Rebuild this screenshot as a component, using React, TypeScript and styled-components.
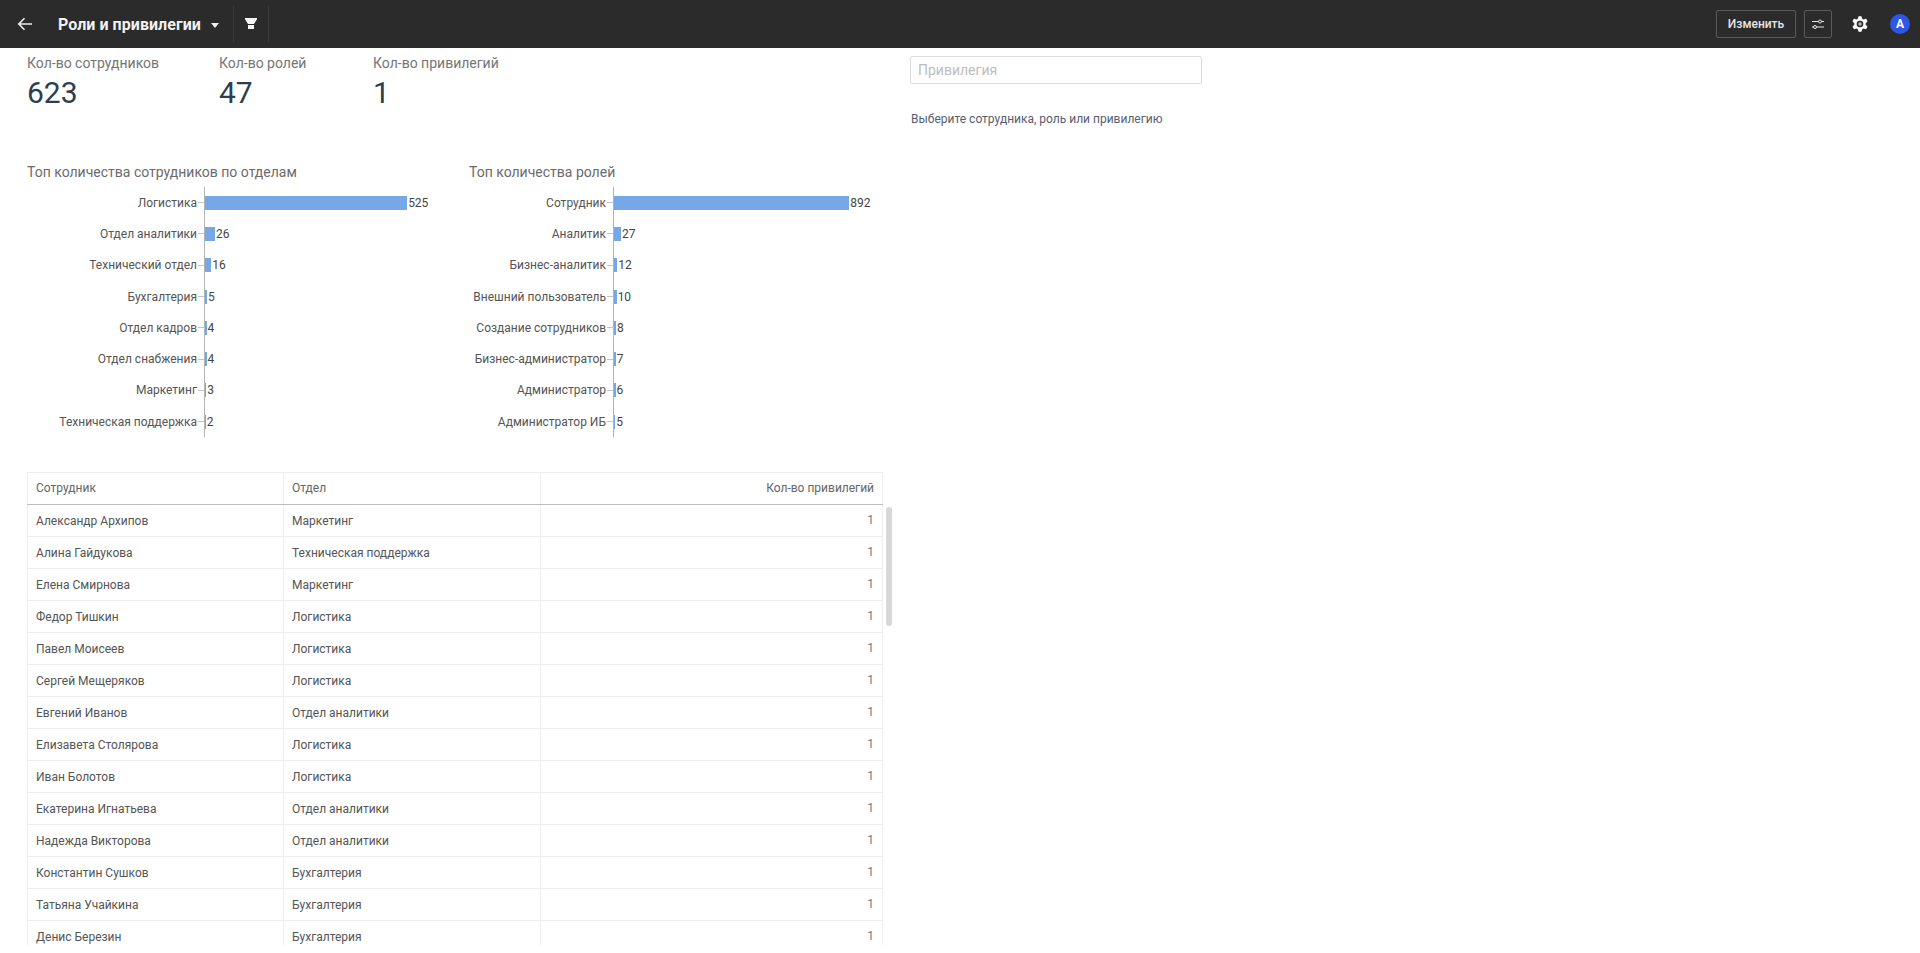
import styled, { createGlobalStyle } from "styled-components";

const GlobalStyle = createGlobalStyle`
  html, body {
    margin: 0;
    padding: 0;
    height: 100%;
    background: #fff;
    overflow: hidden;
    font-family: Roboto, "Liberation Sans", sans-serif;
  }
`;

const Page = styled.div`
  height: 953px;
  overflow: hidden;
`;

const Header = styled.header`
  height: 48px;
  background-color: #2b2b2b;
  display: flex;
  align-items: center;
  color: #fff;
`;

const BackButton = styled.div`
  width: 50px;
  height: 48px;
  display: flex;
  align-items: center;
  justify-content: center;
`;

const PageTitle = styled.div`
  margin-left: 8px;
  font-size: 16px;
  font-weight: 700;
  letter-spacing: 0.05px;
  color: #f2f2f2;
`;

const TitleCaret = styled.div`
  margin-left: 10px;
  margin-top: 2px;
  width: 0;
  height: 0;
  border-left: 4px solid transparent;
  border-right: 4px solid transparent;
  border-top: 5px solid #eee;
`;

const FilterButton = styled.div`
  margin-left: 14px;
  width: 34px;
  height: 36px;
  border-left: 1px solid #3d3d3d;
  border-right: 1px solid #3d3d3d;
  display: flex;
  align-items: center;
  justify-content: center;
`;

const HeaderActions = styled.div`
  margin-left: auto;
  display: flex;
  align-items: center;
`;

const EditButton = styled.div`
  width: 80px;
  height: 28px;
  box-sizing: border-box;
  border: 1px solid #5a5a5a;
  border-radius: 2px;
  display: flex;
  align-items: center;
  justify-content: center;
  font-size: 12px;
  font-weight: 500;
  color: #e4e4e4;
`;

const IconButton = styled.div`
  margin-left: 8px;
  width: 28px;
  height: 28px;
  box-sizing: border-box;
  border: 1px solid #5a5a5a;
  border-radius: 2px;
  display: flex;
  align-items: center;
  justify-content: center;
`;

const SettingsIcon = styled.div`
  margin-left: 16px;
  width: 24px;
  height: 24px;
  display: flex;
  align-items: center;
  justify-content: center;
`;

const Avatar = styled.div`
  margin-left: 18px;
  margin-right: 10px;
  width: 20px;
  height: 20px;
  border-radius: 50%;
  background-color: #2f55e6;
  color: #fff;
  font-size: 12px;
  font-weight: 700;
  display: flex;
  align-items: center;
  justify-content: center;
`;

const Content = styled.main`
  display: flex;
  height: 897px;
`;

const LeftColumn = styled.section`
  width: 895px;
  box-sizing: border-box;
  padding: 7px 0 0 27px;
  display: flex;
  flex-direction: column;
`;

const RightColumn = styled.aside`
  margin-left: 15px;
  padding-top: 8px;
  width: 292px;
`;

const Stats = styled.div`
  display: flex;
`;

const Stat = styled.div<{ $width: number }>`
  width: ${({ $width }) => $width}px;
`;

const StatLabel = styled.div`
  font-size: 14px;
  line-height: 16px;
  color: #757575;
`;

const StatValue = styled.div`
  margin-top: 4px;
  font-size: 30px;
  line-height: 36px;
  color: #2c3e50;
`;

const Charts = styled.div`
  margin-top: 53px;
  display: flex;
`;

const ChartBlock = styled.div<{ $width: number }>`
  width: ${({ $width }) => $width}px;
`;

const ChartTitle = styled.div`
  margin-bottom: 7px;
  font-size: 14px;
  line-height: 16px;
  color: #6b6b6b;
`;

const ChartRow = styled.div`
  display: flex;
  height: 31.3px;
  align-items: center;
`;

const RowLabel = styled.div<{ $width: number }>`
  width: ${({ $width }) => $width}px;
  flex: none;
  text-align: right;
  font-size: 12px;
  color: #555;
  white-space: nowrap;
`;

const Tick = styled.div`
  width: 6px;
  margin-left: 1px;
  height: 1px;
  flex: none;
  background-color: #c4c4c4;
`;

const BarTrack = styled.div`
  height: 100%;
  flex: 1;
  display: flex;
  align-items: center;
  border-left: 1px solid #b3b3b3;
`;

const Bar = styled.div`
  height: 14px;
  flex: none;
  background-color: #76a7e6;
`;

const BarValue = styled.div`
  margin-left: 1px;
  font-size: 12px;
  color: #444;
`;

const TableArea = styled.div`
  margin-top: 35px;
  height: 473px;
  overflow: hidden;
  display: flex;
`;

const Table = styled.table`
  width: 855px;
  height: fit-content;
  flex: none;
  table-layout: fixed;
  border-collapse: collapse;
  font-size: 12px;
`;

const HeadCell = styled.th<{ $right?: boolean; $width: number }>`
  width: ${({ $width }) => $width}px;
  height: 32px;
  box-sizing: border-box;
  padding: 0 8px 1px 8px;
  border: 1px solid #eeeeee;
  border-bottom: 1px solid #bdbdbd;
  font-weight: 400;
  color: #666;
  text-align: ${({ $right }) => ($right ? "right" : "left")};
`;

const Cell = styled.td<{ $right?: boolean }>`
  height: 32px;
  box-sizing: border-box;
  padding: ${({ $right }) => ($right ? "0 8px 1px 8px" : "1px 8px 0 8px")};
  border: 1px solid #eeeeee;
  color: ${({ $right }) => ($right ? "#777" : "#555")};
  text-align: ${({ $right }) => ($right ? "right" : "left")};
`;

const ScrollThumb = styled.div`
  margin: 35px 0 0 3px;
  width: 6px;
  height: 119px;
  border-radius: 3px;
  flex: none;
  background-color: #d8d8d8;
`;

const SearchInput = styled.input`
  display: block;
  width: 292px;
  height: 28px;
  box-sizing: border-box;
  padding: 0 8px 1px 7px;
  border: 1px solid #dcdcdc;
  border-radius: 2px;
  outline: none;
  font-family: inherit;
  font-size: 14px;
  &::placeholder {
    color: #bdbdbd;
  }
`;

const Hint = styled.div`
  margin: 28px 0 0 1px;
  font-size: 12px;
  line-height: 14px;
  color: #566070;
`;

const stats = [
  { label: "Кол-во сотрудников", value: 623, width: 192 },
  { label: "Кол-во ролей", value: 47, width: 154 },
  { label: "Кол-во привилегий", value: 1, width: 160 },
];

const departments = [
  { name: "Логистика", count: 525 },
  { name: "Отдел аналитики", count: 26 },
  { name: "Технический отдел", count: 16 },
  { name: "Бухгалтерия", count: 5 },
  { name: "Отдел кадров", count: 4 },
  { name: "Отдел снабжения", count: 4 },
  { name: "Маркетинг", count: 3 },
  { name: "Техническая поддержка", count: 2 },
];

const roles = [
  { name: "Сотрудник", count: 892 },
  { name: "Аналитик", count: 27 },
  { name: "Бизнес-аналитик", count: 12 },
  { name: "Внешний пользователь", count: 10 },
  { name: "Создание сотрудников", count: 8 },
  { name: "Бизнес-администратор", count: 7 },
  { name: "Администратор", count: 6 },
  { name: "Администратор ИБ", count: 5 },
];

const employees = [
  ["Александр Архипов", "Маркетинг"],
  ["Алина Гайдукова", "Техническая поддержка"],
  ["Елена Смирнова", "Маркетинг"],
  ["Федор Тишкин", "Логистика"],
  ["Павел Моисеев", "Логистика"],
  ["Сергей Мещеряков", "Логистика"],
  ["Евгений Иванов", "Отдел аналитики"],
  ["Елизавета Столярова", "Логистика"],
  ["Иван Болотов", "Логистика"],
  ["Екатерина Игнатьева", "Отдел аналитики"],
  ["Надежда Викторова", "Отдел аналитики"],
  ["Константин Сушков", "Бухгалтерия"],
  ["Татьяна Учайкина", "Бухгалтерия"],
  ["Денис Березин", "Бухгалтерия"],
];

type ChartProps = {
  title: string;
  items: { name: string; count: number }[];
  width: number;
  labelWidth: number;
  scale: number;
};

const BarChart = ({ title, items, width, labelWidth, scale }: ChartProps) => (
  <ChartBlock $width={width}>
    <ChartTitle>{title}</ChartTitle>
    {items.map((item) => (
      <ChartRow key={item.name}>
        <RowLabel $width={labelWidth}>{item.name}</RowLabel>
        <Tick />
        <BarTrack>
          <Bar style={{ width: item.count * scale }} />
          <BarValue>{item.count}</BarValue>
        </BarTrack>
      </ChartRow>
    ))}
  </ChartBlock>
);

export default function App() {
  return (
    <Page>
      <GlobalStyle />
      <Header>
        <BackButton>
          <svg width="16" height="16" viewBox="0 0 16 16" fill="none">
            <path d="M15 8H2M7.5 2.2L1.8 8l5.7 5.8" stroke="#ececec" strokeWidth="1.6" />
          </svg>
        </BackButton>
        <PageTitle>Роли и привилегии</PageTitle>
        <TitleCaret />
        <FilterButton>
          <svg width="14" height="14" viewBox="0 0 14 14">
            <path d="M1 1h12v1.2L10 7H4L1 2.2z M4 8h6v4H4z" fill="#f5f5f5" />
          </svg>
        </FilterButton>
        <HeaderActions>
          <EditButton>Изменить</EditButton>
          <IconButton>
            <svg width="14" height="14" viewBox="0 0 14 14" fill="none" stroke="#e8e8e8" strokeWidth="1">
              <path d="M1 4.5h6.5M10.5 4.5H13M1 10h1.5M5.5 10H13" />
              <circle cx="9" cy="4.5" r="1.5" />
              <circle cx="4" cy="10" r="1.5" />
            </svg>
          </IconButton>
          <SettingsIcon>
            <svg width="18" height="18" viewBox="0 0 18 18">
              <g stroke="#f7f7f7" strokeWidth="4.2" strokeLinecap="round">
                <path d="M9 3v12" />
                <path d="M3.8 6l10.4 6" />
                <path d="M3.8 12l10.4-6" />
              </g>
              <circle cx="9" cy="9" r="5.8" fill="#f7f7f7" />
              <circle cx="9" cy="9" r="3.3" fill="#2b2b2b" />
              <circle cx="9" cy="9" r="1.7" fill="#b5b5b5" />
            </svg>
          </SettingsIcon>
          <Avatar>A</Avatar>
        </HeaderActions>
      </Header>
      <Content>
        <LeftColumn>
          <Stats>
            {stats.map((stat) => (
              <Stat key={stat.label} $width={stat.width}>
                <StatLabel>{stat.label}</StatLabel>
                <StatValue>{stat.value}</StatValue>
              </Stat>
            ))}
          </Stats>
          <Charts>
            <BarChart
              title="Топ количества сотрудников по отделам"
              items={departments}
              width={442}
              labelWidth={170}
              scale={0.385}
            />
            <BarChart
              title="Топ количества ролей"
              items={roles}
              width={413}
              labelWidth={137}
              scale={0.2637}
            />
          </Charts>
          <TableArea>
            <Table>
              <thead>
                <tr>
                  <HeadCell $width={256}>Сотрудник</HeadCell>
                  <HeadCell $width={257}>Отдел</HeadCell>
                  <HeadCell $width={342} $right>
                    Кол-во привилегий
                  </HeadCell>
                </tr>
              </thead>
              <tbody>
                {employees.map(([name, department]) => (
                  <tr key={name}>
                    <Cell>{name}</Cell>
                    <Cell>{department}</Cell>
                    <Cell $right>1</Cell>
                  </tr>
                ))}
              </tbody>
            </Table>
            <ScrollThumb />
          </TableArea>
        </LeftColumn>
        <RightColumn>
          <SearchInput placeholder="Привилегия" />
          <Hint>Выберите сотрудника, роль или привилегию</Hint>
        </RightColumn>
      </Content>
    </Page>
  );
}
